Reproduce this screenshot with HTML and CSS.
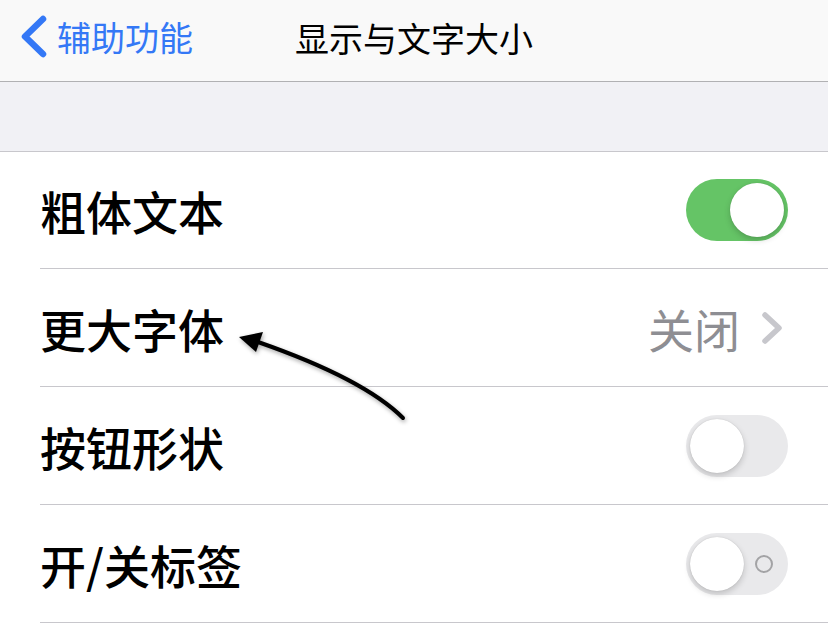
FILE: index.html
```html
<!DOCTYPE html>
<html>
	<head>
		<meta charset="utf-8" />
		<title>显示与文字大小</title>
		<link rel="stylesheet" href="styles.css">
	</head>
	<body>
		<div class="screen">
			<header class="navbar">
				<a class="back">
					<svg class="back-icon" width="28" height="44" viewBox="0 0 28 44">
						<polyline points="23,4 5,21.5 23,39" />
					</svg>
					<span>辅助功能</span>
				</a>
				<h1 class="title">显示与文字大小</h1>
			</header>

			<div class="group-gap"></div>

			<ul class="list">
				<li class="row">
					<span class="label">粗体文本</span>
					<span class="switch on"><span class="knob"></span></span>
				</li>
				<li class="row">
					<span class="label">更大字体</span>
					<span class="detail">关闭
						<svg class="chevron" width="24" height="36" viewBox="0 0 24 36">
							<polyline points="5,5 19,18 5,31" />
						</svg>
					</span>
				</li>
				<li class="row">
					<span class="label">按钮形状</span>
					<span class="switch"><span class="knob"></span></span>
				</li>
				<li class="row">
					<span class="label">开/关标签</span>
					<span class="switch labels"><span class="knob"></span><span class="ring"></span></span>
				</li>
			</ul>

			<!-- annotation drawn over the screenshot -->
			<svg class="arrow" width="828" height="631" viewBox="0 0 828 631">
				<path d="M403 418 Q364 379 258 342" />
				<polygon points="239,337 263,332 256,352" />
			</svg>
		</div>
	</body>
</html>
```

FILE: styles.css
```css
body {
	margin: 0;
	font-family: "Noto Sans CJK SC", "Noto Sans", sans-serif;
	background: #fff;
}
.screen {
	position: relative;
	width: 828px;
	height: 631px;
	overflow: hidden;
}

/* nav */
.navbar {
	height: 81px;
	background: #f9f9f9;
	border-bottom: 1px solid #b1b1b3;
	display: flex;
	align-items: center;
	justify-content: center;
	position: relative;
}
.back {
	position: absolute;
	left: 20px;
	top: 13px;
	display: flex;
	align-items: center;
	gap: 9px;
	color: #3478f6;
	font-size: 34px;
	line-height: 48px;
}
.back-icon polyline {
	fill: none;
	stroke: #3478f6;
	stroke-width: 6.5;
	stroke-linecap: round;
	stroke-linejoin: round;
}
.title {
	margin: -6px 0 0 0;
	font-size: 34px;
	font-weight: 400;
	color: #000;
}

.group-gap {
	height: 69px;
	background: #f1f1f5;
	border-bottom: 1px solid #c8c7cc;
}

/* list */
.list {
	list-style: none;
	margin: 0;
	padding: 0 0 0 40px;
}
.row {
	height: 117px;
	border-bottom: 1px solid #c8c7cc;
	display: flex;
	align-items: center;
	justify-content: space-between;
	padding-right: 40px;
}
.row:first-child {
	height: 116px;
}
.label {
	font-size: 46px;
	font-weight: 500;
	color: #000;
}
.detail {
	display: flex;
	align-items: center;
	gap: 20px;
	font-size: 46px;
	color: #8e8e93;
	margin-right: 4px;
}
.chevron polyline {
	fill: none;
	stroke: #c7c7cc;
	stroke-width: 5.5;
	stroke-linecap: round;
	stroke-linejoin: round;
}

/* switch */
.switch {
	position: relative;
	width: 102px;
	height: 62px;
	border-radius: 31px;
	background: #e9e9eb;
	display: block;
}
.switch .knob {
	position: absolute;
	top: 4px;
	left: 4px;
	width: 54px;
	height: 54px;
	border-radius: 50%;
	background: #fff;
	box-shadow: 0 3px 6px rgba(0, 0, 0, 0.18), 0 0 1px rgba(0, 0, 0, 0.2);
}
.switch.on {
	background: #65c466;
}
.switch.on .knob {
	left: 44px;
}
.switch .ring {
	position: absolute;
	left: 69px;
	top: 22px;
	width: 14px;
	height: 14px;
	border: 2px solid #a3a3a5;
	border-radius: 50%;
}

/* annotation */
.arrow {
	position: absolute;
	left: 0;
	top: 0;
	filter: drop-shadow(1px 2px 2px rgba(0, 0, 0, 0.35));
}
.arrow path {
	fill: none;
	stroke: #000;
	stroke-width: 4;
	stroke-linecap: round;
}
.arrow polygon {
	fill: #000;
}
```
